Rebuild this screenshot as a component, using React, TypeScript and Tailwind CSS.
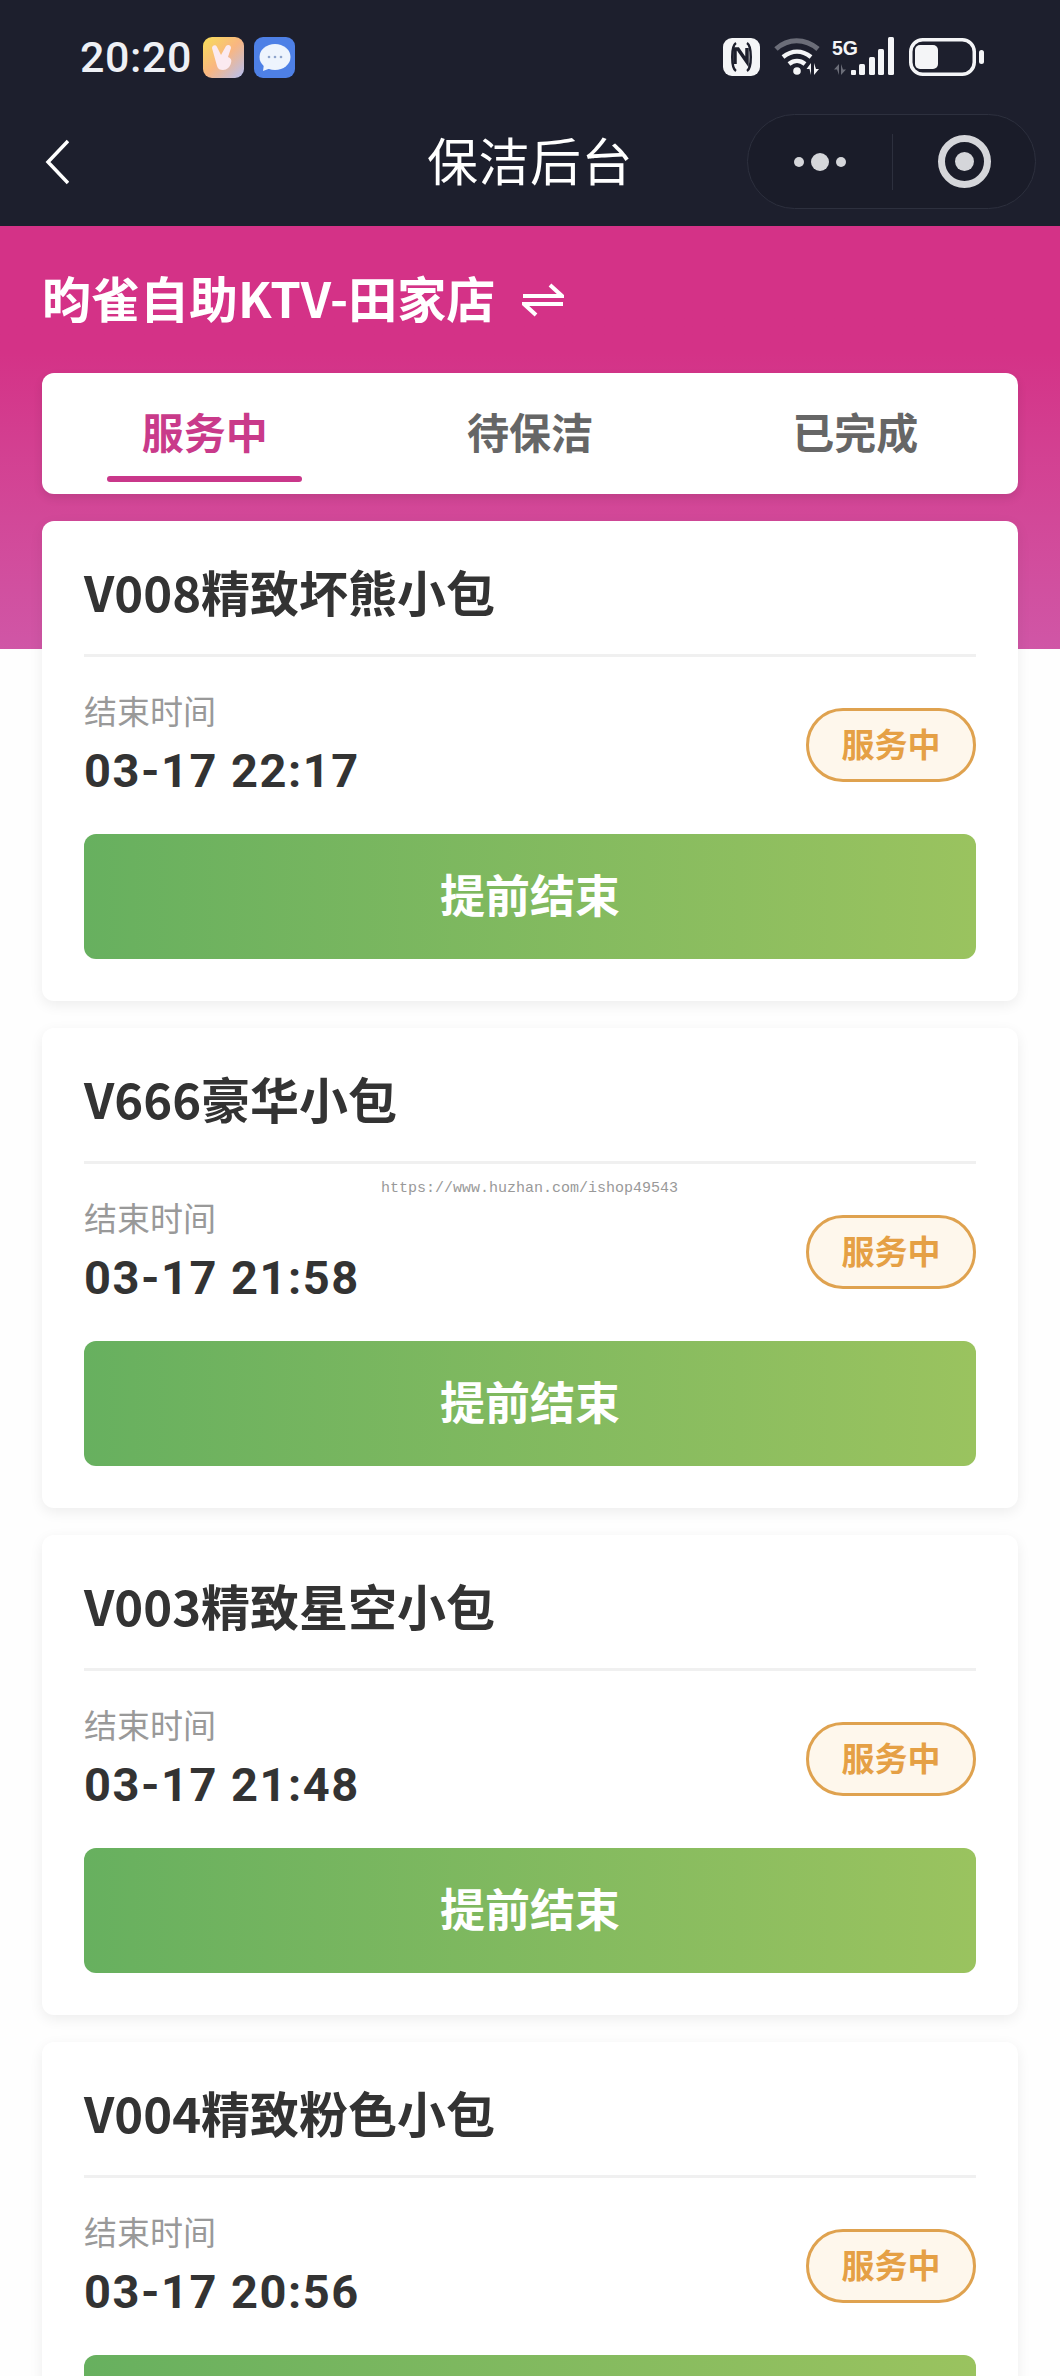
import React from 'react';

interface Room {
    name: string;
    endTime: string;
}

const rooms: Room[] = [
    { name: 'V008精致坏熊小包', endTime: '03-17 22:17' },
    { name: 'V666豪华小包', endTime: '03-17 21:58' },
    { name: 'V003精致星空小包', endTime: '03-17 21:48' },
    { name: 'V004精致粉色小包', endTime: '03-17 20:56' },
];

const tabs = ['服务中', '待保洁', '已完成'];

const StatusBar: React.FC = () => (
    <div className="h-[114px] flex items-center justify-between pl-[80px] pr-[76px]">
        <div className="flex items-center">
            <span className="text-[43px] font-medium text-[#eef0f5] leading-none tracking-[0.6px] font-['Roboto',sans-serif]">20:20</span>
            <svg className="ml-[11px]" width="41" height="41" viewBox="0 0 41 41">
                <defs>
                    <linearGradient id="app1" x1="0" y1="0" x2="1" y2="1">
                        <stop offset="0" stopColor="#f8de58" />
                        <stop offset="0.5" stopColor="#f9b681" />
                        <stop offset="1" stopColor="#b4c0f4" />
                    </linearGradient>
                </defs>
                <rect width="41" height="41" rx="9" fill="url(#app1)" />
                <path d="M9 11c0-3 4-4 5-1l4 8 5-9c2-2 5-1 5 2l-3 9c3 1 4 3 3 6-1 4-4 7-8 7-3 0-5-1-6-4z" fill="#fbeaf0" />
            </svg>
            <svg className="ml-[10px]" width="41" height="41" viewBox="0 0 41 41">
                <rect width="41" height="41" rx="9" fill="#4e80e6" />
                <ellipse cx="21" cy="20" rx="15.5" ry="13" fill="#eef4fd" />
                <path d="M10 27l-1 7 8-3z" fill="#eef4fd" />
                <circle cx="15" cy="20" r="1.3" fill="#8ea4cc" />
                <circle cx="21" cy="20" r="1.3" fill="#8ea4cc" />
                <circle cx="27" cy="20" r="1.3" fill="#8ea4cc" />
            </svg>
        </div>
        <div className="flex items-center">
            <svg width="37" height="38" viewBox="0 0 37 38">
                <rect width="37" height="38" rx="9" fill="#f4f5f7" />
                <path d="M13 5C8 8 8 30 13 33" fill="none" stroke="#1d1f2d" strokeWidth="2.5" />
                <path d="M24 5c5 3 5 25 0 28" fill="none" stroke="#1d1f2d" strokeWidth="2.5" />
                <path d="M12 26V11h3l9 13V10" fill="none" stroke="#1d1f2d" strokeWidth="3.5" />
            </svg>
            <svg className="ml-[14px]" width="49" height="40" viewBox="0 0 49 40">
                <path d="M2 12C14 1 31 1 44 12" fill="none" stroke="#6b6d78" strokeWidth="5" />
                <path d="M9 20c9-7 19-7 28 0" fill="none" stroke="#f4f5f7" strokeWidth="4.5" />
                <path d="M15 27c5-4 11-4 16 0" fill="none" stroke="#f4f5f7" strokeWidth="4.5" />
                <circle cx="23" cy="34" r="3.8" fill="#f4f5f7" />
                <path d="M37 38V26l-4.500 6h3zM40 26v12l5-6h-3z" fill="#f4f5f7" />
            </svg>
            <svg className="ml-[9px]" width="62" height="40" viewBox="0 0 62 40">
                <text x="0" y="18" fontSize="20" fontWeight="700" fill="#f4f5f7" fontFamily="'Liberation Sans',sans-serif" textLength="26" lengthAdjust="spacingAndGlyphs">5G</text>
                <path d="M7 38V27l-5 5.500h3zM9 27v11l5-5.500h-3z" fill="#6b6d78" />
                <rect x="19" y="33" width="5" height="5" rx="1" fill="#f4f5f7" />
                <rect x="27" y="27" width="6" height="11" rx="1.500" fill="#f4f5f7" />
                <rect x="37" y="20" width="6" height="18" rx="1.500" fill="#f4f5f7" />
                <rect x="46" y="12" width="6" height="26" rx="1.500" fill="#f4f5f7" />
                <rect x="56" y="0" width="6" height="38" rx="1.500" fill="#f4f5f7" />
            </svg>
            <svg className="ml-[15px]" width="75" height="38" viewBox="0 0 75 38">
                <rect x="1.750" y="1.750" width="63.500" height="34.500" rx="12" fill="none" stroke="#f4f5f7" strokeWidth="3.500" />
                <rect x="6" y="7" width="23" height="24" rx="5" fill="#f4f5f7" />
                <rect x="70" y="12" width="5" height="14" rx="2.500" fill="#f4f5f7" />
            </svg>
        </div>
    </div>
);

const NavBar: React.FC = () => (
    <div className="h-[95px] grid grid-cols-[1fr_auto_1fr] items-center px-[24px]">
        <svg className="ml-[21px]" width="24" height="46" viewBox="0 0 24 46">
            <path d="M23 2L3 23l20 21" fill="none" stroke="#ffffff" strokeWidth="3.5" />
        </svg>
        <div className="pb-[5px] text-[51px] leading-none text-white tracking-[0.5px]">保洁后台</div>
        <div className="justify-self-end w-[289px] h-[95px] rounded-full bg-[#1a1c29] border border-[#2d303e] flex items-center">
            <div className="w-[144px] flex items-center justify-center gap-[7px]">
                <span className="w-[10px] h-[10px] rounded-full bg-[#d5d6da]" />
                <span className="w-[18px] h-[18px] rounded-full bg-[#d5d6da]" />
                <span className="w-[10px] h-[10px] rounded-full bg-[#d5d6da]" />
            </div>
            <div className="w-px h-[56px] bg-[#2d303e]" />
            <div className="flex-1 flex items-center justify-center">
                <div className="w-[53px] h-[53px] rounded-full border-[7px] border-[#d5d6da] flex items-center justify-center">
                    <span className="w-[19px] h-[19px] rounded-full bg-[#d5d6da]" />
                </div>
            </div>
        </div>
    </div>
);

const SwapIcon: React.FC = () => (
    <svg width="42" height="34" viewBox="0 0 42 34">
        <path d="M1 13h39L28 2" fill="none" stroke="#ffffff" strokeWidth="4" />
        <path d="M41 21H2l12 11" fill="none" stroke="#ffffff" strokeWidth="4" />
    </svg>
);

const RoomCard: React.FC<{ room: Room }> = ({ room }) => (
    <div className="bg-white rounded-[12px] shadow-[0_4px_14px_rgba(0,0,0,0.07)] px-[42px] pb-[42px]">
        <div className="pt-[42px] border-b-[3px] border-[#f0f0f0] h-[136px]">
            <h3 className="text-[49px] leading-[56px] font-bold text-[#333333]">{room.name}</h3>
        </div>
        <div className="h-[177px] flex items-center justify-between">
            <div className="pb-[4px]">
                <p className="text-[33px] leading-[52px] text-[#999999]">结束时间</p>
                <p className="mt-[3px] text-[47px] leading-[64px] font-bold text-[#333333] tracking-[1.5px] font-['Roboto',sans-serif]">{room.endTime}</p>
            </div>
            <span className="mb-[2px] w-[170px] h-[74px] pb-[2px] rounded-full border-[3px] border-[#dfa24f] bg-[#fef7ec] flex items-center justify-center text-[33px] font-bold text-[#e5a045]">
                服务中
            </span>
        </div>
        <button className="w-full h-[125px] pb-[5px] rounded-[12px] bg-gradient-to-r from-[#67b05f] to-[#9ac35f] text-[45px] font-bold text-white">
            提前结束
        </button>
    </div>
);

const App: React.FC = () => {
    return (
        <div className="relative w-[1060px] h-[2376px] overflow-hidden bg-[#fefefe] font-['Noto_Sans_CJK_SC','Noto_Sans',sans-serif]">
            <div className="bg-[#1d1f2d] h-[226px]">
                <StatusBar />
                <NavBar />
            </div>

            <div className="h-[423px] bg-gradient-to-b from-[#d43287] from-30% to-[#d056a6] px-[42px] pt-[44px]">
                <div className="h-[60px] flex items-center gap-[27px]">
                    <h1 className="pb-[7px] text-[49px] leading-[60px] font-bold text-white">昀雀自助KTV-田家店</h1>
                    <SwapIcon />
                </div>
                <div className="mt-[43px] h-[121px] bg-white rounded-[12px] shadow-[0_4px_10px_rgba(0,0,0,0.1)] flex">
                    {tabs.map((tab, index) => (
                        <div key={tab} className="flex-1 flex flex-col items-center">
                            <span className={`mt-[28px] text-[42px] leading-[60px] font-bold ${index === 0 ? 'text-[#c93a8a]' : 'text-[#666666]'}`}>
                                {tab}
                            </span>
                            {index === 0 && <span className="mt-[15px] w-[195px] h-[6px] rounded-full bg-[#c9378a]" />}
                        </div>
                    ))}
                </div>
            </div>

            <div className="relative -mt-[128px] px-[42px] flex flex-col gap-[27px]">
                {rooms.map((room) => (
                    <RoomCard key={room.name} room={room} />
                ))}
            </div>

            {/* site watermark stamped over the screenshot */}
            <div className="absolute left-[381px] top-[1180px] text-[15px] leading-[18px] text-[#999999] font-['Liberation_Mono',monospace]">
                https://www.huzhan.com/ishop49543
            </div>
        </div>
    );
};

export default App;
